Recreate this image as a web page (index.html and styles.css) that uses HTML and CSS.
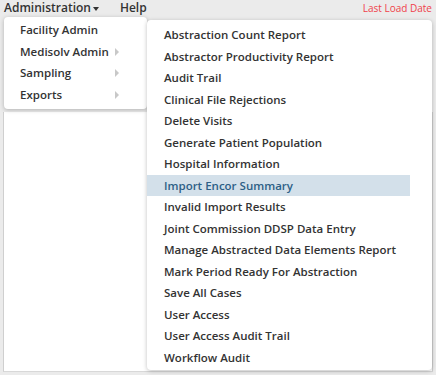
FILE: index.html
```html
<!DOCTYPE html>
<html lang="en">
<head>
<meta charset="UTF-8">
<title>Administration</title>
<link rel="stylesheet" href="styles.css">
</head>
<body>
<div class="topbar">
    <div class="nav">
        <span class="nav-item open">Administration<span class="caret"></span></span>
        <span class="nav-item">Help</span>
    </div>
    <span class="load-date">Last Load Date</span>
</div>
<div class="content"></div>

<ul class="menu main-menu">
    <li>Facility Admin</li>
    <li>Medisolv Admin<span class="sub-arrow"></span></li>
    <li>Sampling<span class="sub-arrow"></span></li>
    <li>Exports<span class="sub-arrow"></span></li>
</ul>

<ul class="menu sub-menu">
    <li>Abstraction Count Report</li>
    <li>Abstractor Productivity Report</li>
    <li>Audit Trail</li>
    <li>Clinical File Rejections</li>
    <li>Delete Visits</li>
    <li>Generate Patient Population</li>
    <li>Hospital Information</li>
    <li class="active">Import Encor Summary</li>
    <li>Invalid Import Results</li>
    <li>Joint Commission DDSP Data Entry</li>
    <li>Manage Abstracted Data Elements Report</li>
    <li>Mark Period Ready For Abstraction</li>
    <li>Save All Cases</li>
    <li>User Access</li>
    <li>User Access Audit Trail</li>
    <li>Workflow Audit</li>
</ul>
</body>
</html>
```
FILE: styles.css
```css
* {
    margin: 0;
    padding: 0;
    box-sizing: border-box;
    font-family: 'Open Sans', sans-serif;
}
body {
    background: #ebebeb;
    width: 436px;
    height: 375px;
    overflow: hidden;
    position: relative;
}
.topbar {
    display: flex;
    justify-content: space-between;
    align-items: center;
    height: 15px;
    padding: 0 4px;
}
.nav {
    display: flex;
    gap: 21px;
}
.nav-item {
    font-size: 12px;
    font-weight: 600;
    color: #333;
    line-height: 15px;
    white-space: nowrap;
}
.caret {
    display: inline-block;
    margin-left: 2px;
    vertical-align: middle;
    border-top: 4px solid #333;
    border-left: 3.5px solid transparent;
    border-right: 3.5px solid transparent;
}
.load-date {
    font-size: 10px;
    color: #f0414a;
    line-height: 14px;
    white-space: nowrap;
}
.content {
    margin: 97px 3px 0 3px;
    height: 260px;
    background: #fff;
    border-left: 1px solid #cfcfcf;
    border-right: 1px solid #cfcfcf;
    border-bottom: 1px solid #d8d8d8;
}
.menu {
    list-style: none;
    position: absolute;
    background: #fff;
    border-radius: 4px;
    box-shadow: 0 1px 4px rgba(0, 0, 0, 0.25);
}
.menu li {
    font-size: 11.5px;
    font-weight: 600;
    color: #333;
    line-height: 21.5px;
    height: 21.5px;
    position: relative;
    white-space: nowrap;
}
.main-menu {
    left: 4px;
    top: 17px;
    width: 143px;
    padding: 2px 0 4px 16px;
}
.sub-arrow {
    position: absolute;
    left: 95px;
    top: 7px;
    border-left: 4px solid #c8c8c8;
    border-top: 4px solid transparent;
    border-bottom: 4px solid transparent;
}
.sub-menu {
    left: 147px;
    top: 20px;
    width: 285px;
    height: 350px;
    padding: 4px 0;
}
.sub-menu li {
    padding-left: 17px;
    width: 263px;
}
.sub-menu li.active {
    background: #d3e0ea;
    color: #2d5f86;
}
```
